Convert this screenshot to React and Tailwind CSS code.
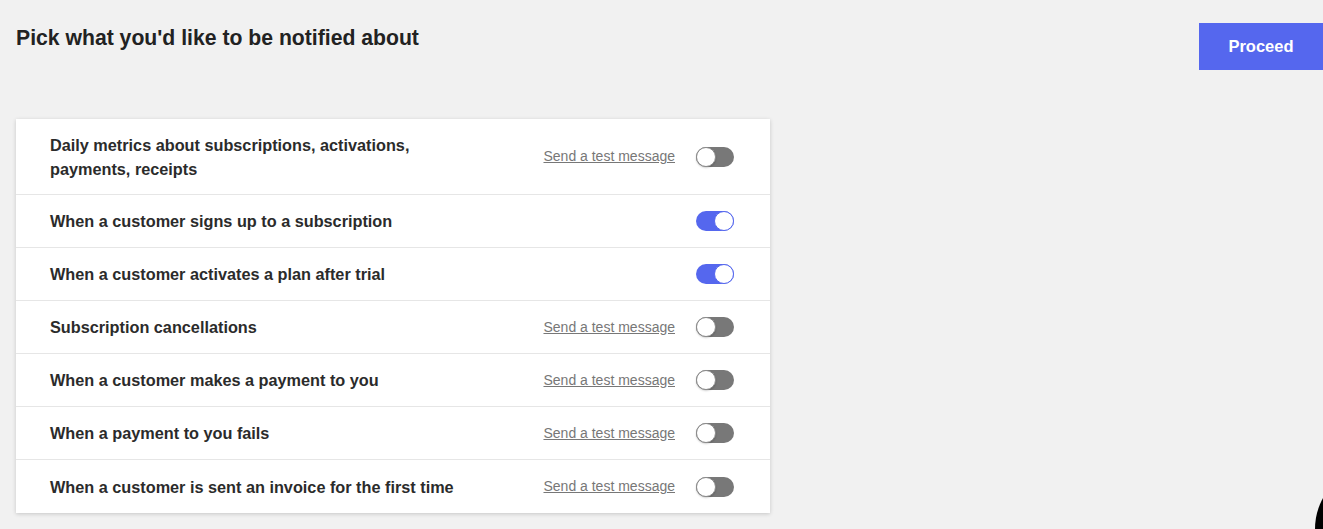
import React from "react";

const rows = [
  { label: "Daily metrics about subscriptions, activations, payments, receipts", test: true, on: false, tall: true },
  { label: "When a customer signs up to a subscription", test: false, on: true },
  { label: "When a customer activates a plan after trial", test: false, on: true },
  { label: "Subscription cancellations", test: true, on: false },
  { label: "When a customer makes a payment to you", test: true, on: false },
  { label: "When a payment to you fails", test: true, on: false },
  { label: "When a customer is sent an invoice for the first time", test: true, on: false },
];

function Toggle({ on }) {
  return on ? (
    <div className="relative w-[38px] h-[20px] rounded-full bg-[#5567ee]">
      <div className="absolute right-0 top-0 w-[20px] h-[20px] rounded-full bg-white border border-[#5567ee]" />
    </div>
  ) : (
    <div className="relative w-[38px] h-[20px] rounded-full bg-[#787878]">
      <div className="absolute left-0 top-0 w-[20px] h-[20px] rounded-full bg-white border border-[#8a8a8a] shadow-[0_1px_2px_rgba(0,0,0,0.2)]" />
    </div>
  );
}

export default function App() {
  return (
    <div
      className="relative h-[529px] w-[1323px] overflow-hidden bg-[#f1f1f1]"
      style={{ fontFamily: '"Liberation Sans", Arial, sans-serif' }}
    >
      <div className="flex items-start justify-between pl-[16px]">
        <h1 className="mt-[25px] text-[21.2px] leading-[26px] font-bold text-[#222]">
          Pick what you'd like to be notified about
        </h1>
        <button className="mt-[23px] w-[124px] h-[47px] bg-[#5567ee] text-white text-[16.5px] font-bold">
          Proceed
        </button>
      </div>
      <div className="ml-[16px] mt-[49px] w-[754px] bg-white shadow-[0_1px_4px_rgba(0,0,0,0.18)]">
        {rows.map((r, i) => (
          <div
            key={i}
            className={`flex items-center pl-[34px] pr-[36px] ${r.tall ? "h-[76px]" : "h-[53px]"} ${
              i < rows.length - 1 ? "border-b border-[#e6e6e6]" : ""
            }`}
          >
            <div className="w-[420px] text-[16.25px] leading-[24px] font-bold text-[#2b2b2b]">{r.label}</div>
            <div className="flex-1" />
            {r.test && (
              <a className="text-[14px] text-[#777] underline mr-[21px]">
                Send a test message
              </a>
            )}
            <Toggle on={r.on} />
          </div>
        ))}
      </div>
      <div className="absolute left-[1315px] top-[465px] w-[128px] h-[128px] rounded-full bg-black" />
    </div>
  );
}
